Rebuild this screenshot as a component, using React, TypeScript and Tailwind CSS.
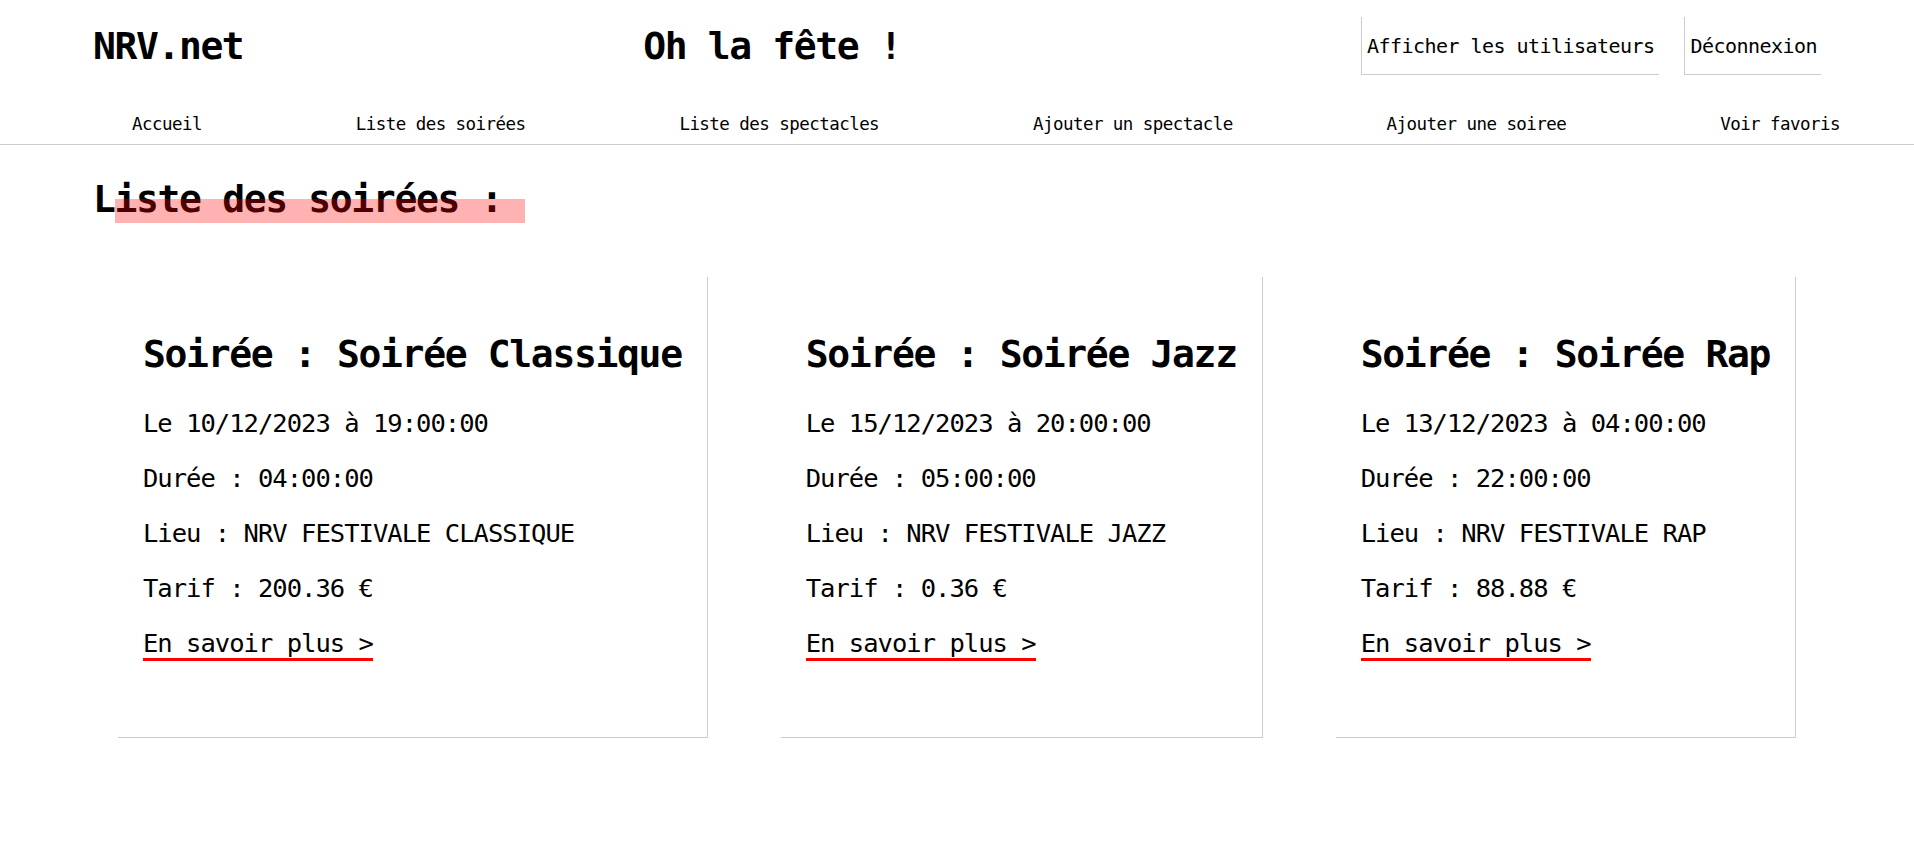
import React from "react";

const soirees = [
  { nom: "Soirée Classique", date: "10/12/2023", heure: "19:00:00", duree: "04:00:00", lieu: "NRV FESTIVALE CLASSIQUE", tarif: "200.36" },
  { nom: "Soirée Jazz", date: "15/12/2023", heure: "20:00:00", duree: "05:00:00", lieu: "NRV FESTIVALE JAZZ", tarif: "0.36" },
  { nom: "Soirée Rap", date: "13/12/2023", heure: "04:00:00", duree: "22:00:00", lieu: "NRV FESTIVALE RAP", tarif: "88.88" },
];

const navItems = ["Accueil", "Liste des soirées", "Liste des spectacles", "Ajouter un spectacle", "Ajouter une soiree", "Voir favoris"];

export default function App() {
  return (
    <div className="min-h-[865px] w-full bg-white text-black font-['DejaVu_Sans_Mono','Liberation_Mono',monospace]">
      <header>
        <div className="flex items-center h-[58px] mt-[17px] px-[93px]">
          <div className="text-[38px] font-bold tracking-[-1.4px] leading-none whitespace-nowrap">NRV.net</div>
          <div className="ml-[400px] text-[38px] font-bold tracking-[-1.4px] leading-none whitespace-nowrap">Oh la fête !</div>
          <div className="ml-auto flex h-full gap-[25px]">
            <a className="flex items-center h-full border-l border-b border-[#cccccc] pl-[5px] pr-[5px] text-[20px] tracking-[-0.54px] whitespace-nowrap">Afficher les utilisateurs</a>
            <a className="flex items-center h-full border-l border-b border-[#cccccc] pl-[5px] pr-[4px] text-[20px] tracking-[-0.54px] whitespace-nowrap">Déconnexion</a>
          </div>
        </div>
        <nav className="mt-[29px] h-[41px] flex items-center justify-between pl-[132px] pr-[74px] border-b border-[#cccccc]">
          {navItems.map((n) => (
            <a key={n} className="text-[17.5px] tracking-[-0.55px] whitespace-nowrap">{n}</a>
          ))}
        </nav>
      </header>
      <main>
        <div className="px-[93px] mt-[31px]">
          <h1 className="relative inline-block text-[38px] font-bold tracking-[-1.35px] leading-[46px] whitespace-nowrap">
            Liste des soirées :
            <span className="absolute left-[22px] top-[23px] w-[410px] h-[24px] bg-[rgba(255,0,0,0.3)]"></span>
          </h1>
        </div>
        <div className="flex items-start gap-[73px] pl-[118px] mt-[55px]">
          {soirees.map((s) => (
            <div key={s.nom} className="border-r border-b border-[#cccccc] px-[25px] pt-[54px] pb-[66px]">
              <h2 className="text-[38px] font-bold tracking-[-1.33px] leading-[46px] whitespace-nowrap">Soirée : {s.nom}</h2>
              <div className="mt-[19px] text-[25.5px] tracking-[-0.98px] leading-[55px] whitespace-nowrap">
                <p>Le {s.date} à {s.heure}</p>
                <p>Durée : {s.duree}</p>
                <p>Lieu : {s.lieu}</p>
                <p>Tarif : {s.tarif} €</p>
                <p>
                  <a className="border-b-[3px] border-[#ff0000]">En savoir plus &gt;</a>
                </p>
              </div>
            </div>
          ))}
        </div>
      </main>
    </div>
  );
}
